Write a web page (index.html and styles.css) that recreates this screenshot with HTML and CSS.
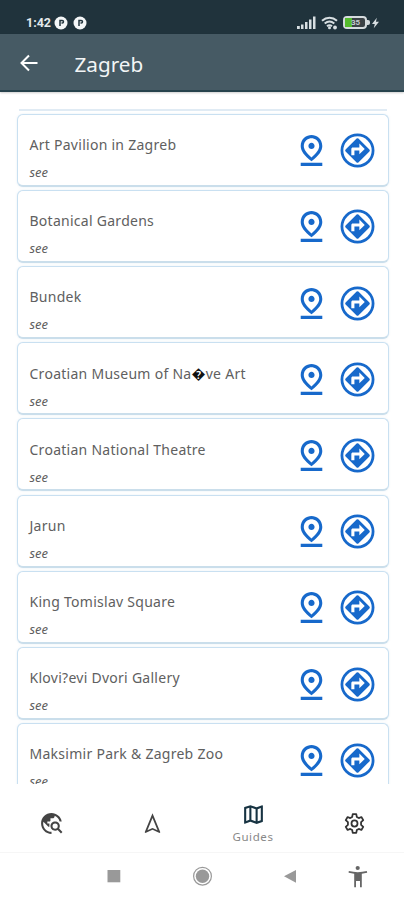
FILE: index.html
```
<!DOCTYPE html>
<html lang="en">
<head>
<meta charset="utf-8">
<title>Zagreb</title>
<link rel="stylesheet" href="styles.css">
</head>
<body>
<svg class="defs" aria-hidden="true">
  <symbol id="pin" viewBox="0 0 24 24"><path d="M12 4c1.93 0 5 1.4 5 5.15 0 2.16-1.72 4.67-5 7.32-3.28-2.65-5-5.17-5-7.32C7 5.4 10.07 4 12 4m0-2C8.73 2 5 4.46 5 9.15c0 3.12 2.33 6.41 7 9.85 4.67-3.44 7-6.73 7-9.85C19 4.46 15.27 2 12 2zm0 5c-1.1 0-2 .9-2 2s.9 2 2 2 2-.9 2-2-.9-2-2-2zM5 20h14v2H5z"/></symbol>
  <symbol id="direction" viewBox="0 0 24 24"><path fill-rule="evenodd" d="M12 1a11 11 0 1 0 0 22 11 11 0 0 0 0-22zm0 20.200a9.200 9.200 0 1 1 0-18.400 9.200 9.200 0 0 1 0 18.400z"/><path fill-rule="evenodd" d="M19.730 11.420l-7.160-7.150a.8.8 0 0 0-1.140 0l-7.160 7.150a.8.8 0 0 0 0 1.150l7.160 7.160a.8.8 0 0 0 1.140 0l7.160-7.160a.8.8 0 0 0 0-1.150zM13.200 14.500V12H10v3H8v-4c0-.6.4-1 1-1h4.200V7.500l3.500 3.500z"/></symbol>
  <symbol id="badge" viewBox="0 0 14 14"><circle cx="7" cy="7" r="6.500" fill="#f4f7f8"/><path d="M6 10V4.500h2.200a1.300 1.300 0 0 1 0 2.600H7.500" fill="none" stroke="#22353d" stroke-width="1.500"/></symbol>
</svg>
<div class="screen">
  <div class="status">
    <span class="time">1:42</span>
    <svg class="badge"><use href="#badge"/></svg>
    <svg class="badge second"><use href="#badge"/></svg>
    <svg class="signal" viewBox="0 0 19 13"><path d="M0 10h2.800v3H0zM4 8.500h2.500V13H4zM8 6h2.500v7H8zM12 3.500h2.500V13H12zM16 .5h2.500V13H16z"/></svg>
    <svg class="wifi" viewBox="0 0 17 14"><g fill="none" stroke="#d8dfe2" stroke-width="2"><path d="M1 4.800c4.500-4 10.500-4 15 0M3.700 7.500c3-2.600 6.600-2.600 9.600 0M6 10.200c1.600-1.300 3.400-1.300 5 0"/></g><circle cx="8.500" cy="11.700" r="1.500"/><circle cx="14" cy="11.500" r="1.900"/></svg>
    <div class="battery"><span class="charge"></span><span class="level">35</span></div>
    <svg class="bolt" viewBox="0 0 8 12"><path d="M5.500 0L0 7h3.200L2 12l6-7.500H4.500z"/></svg>
  </div>
  <header class="appbar">
    <svg class="back" viewBox="0 0 18 18"><path d="M9 1.500L1.500 9 9 16.500M1.700 9H17.500"/></svg>
    <h1>Zagreb</h1>
  </header>
  <main class="list">
    <div class="edge"></div>
    <article class="card"><div><h2>Art Pavilion in Zagreb</h2><p>see</p></div><svg class="act"><use href="#pin"/></svg><svg class="act"><use href="#direction"/></svg></article>
    <article class="card"><div><h2>Botanical Gardens</h2><p>see</p></div><svg class="act"><use href="#pin"/></svg><svg class="act"><use href="#direction"/></svg></article>
    <article class="card"><div><h2>Bundek</h2><p>see</p></div><svg class="act"><use href="#pin"/></svg><svg class="act"><use href="#direction"/></svg></article>
    <article class="card"><div><h2>Croatian Museum of Na<span class="unknown">�</span>ve Art</h2><p>see</p></div><svg class="act"><use href="#pin"/></svg><svg class="act"><use href="#direction"/></svg></article>
    <article class="card"><div><h2>Croatian National Theatre</h2><p>see</p></div><svg class="act"><use href="#pin"/></svg><svg class="act"><use href="#direction"/></svg></article>
    <article class="card"><div><h2>Jarun</h2><p>see</p></div><svg class="act"><use href="#pin"/></svg><svg class="act"><use href="#direction"/></svg></article>
    <article class="card"><div><h2>King Tomislav Square</h2><p>see</p></div><svg class="act"><use href="#pin"/></svg><svg class="act"><use href="#direction"/></svg></article>
    <article class="card"><div><h2>Klovi?evi Dvori Gallery</h2><p>see</p></div><svg class="act"><use href="#pin"/></svg><svg class="act"><use href="#direction"/></svg></article>
    <article class="card"><div><h2>Maksimir Park &amp; Zagreb Zoo</h2><p>see</p></div><svg class="act"><use href="#pin"/></svg><svg class="act"><use href="#direction"/></svg></article>
  </main>
  <nav class="tabs">
    <a><svg viewBox="0 0 24 24"><path d="M19.300 16.900c.4-.7.700-1.500.7-2.400 0-2.500-2-4.500-4.500-4.500S11 12 11 14.500s2 4.500 4.500 4.500c.9 0 1.700-.3 2.400-.7l3.200 3.200 1.400-1.400zm-3.800.1a2.500 2.500 0 1 1 0-5 2.500 2.500 0 0 1 0 5zM12 20v2C6.480 22 2 17.520 2 12S6.480 2 12 2c4.840 0 8.870 3.440 9.800 8h-2.070A8 8 0 0 0 15 4.590V5c0 1.100-.9 2-2 2h-2v2c0 .55-.45 1-1 1H8v2h2v3H9l-4.790-4.790C4.080 10.790 4 11.380 4 12c0 4.410 3.590 8 8 8z"/></svg></a>
    <a><svg viewBox="0 0 24 24"><path d="M12 6.600l4.860 11.840-3.220-1.430L12 16.280l-1.640.73-3.220 1.430L12 6.600M12 2.200L4.500 20.290l.71.710L12 18l6.790 3 .71-.710z"/></svg></a>
    <a class="active"><svg viewBox="0 0 24 24"><path d="M20.500 3l-.16.030L15 5.100 9 3 3.360 4.900c-.21.070-.36.250-.36.480V20.500c0 .28.220.5.500.5l.16-.030L9 18.900l6 2.100 5.640-1.900c.21-.070.360-.25.360-.48V3.500c0-.28-.22-.5-.5-.5zM10 5.470l4 1.400v11.660l-4-1.400V5.470zm-5 .99l3-1.010v11.700l-3 1.160V6.460zm14 11.080l-3 1.010V6.860l3-1.160v11.840z"/></svg><span>Guides</span></a>
    <a><svg viewBox="0 0 24 24"><g fill="none" stroke="#333" stroke-width="1.700" stroke-linejoin="round"><path d="M10.300 3h3.400l.5 2.700 1.900 1.100 2.500-1 1.800 3-2.100 1.900v2.600l2.100 1.900-1.800 3-2.500-1-1.900 1.100-.5 2.700h-3.400l-.5-2.700-1.900-1.100-2.500 1-1.800-3 2.100-1.900v-2.600L3.600 8.800l1.800-3 2.500 1 1.900-1.100z"/><circle cx="12" cy="12" r="2.900"/></g></svg></a>
  </nav>
  <div class="sysbar">
    <svg viewBox="0 0 404 48"><path d="M107.500 17H120.300V29.300H107.500z"/><circle cx="202.500" cy="23.200" r="6.700"/><circle cx="202.500" cy="23.200" r="8.900" fill="none" stroke="#999" stroke-width="1.200"/><path d="M284 23.200L296 16.900V29.700z"/><g fill="#666" transform="translate(0 -.8)"><circle cx="357.700" cy="15.800" r="2.100"/><path d="M348.800 18.800c6 1.500 12 1.500 18 0l.4 1.700c-2 .5-3.700.8-5.400 1V35h-1.800v-6.300h-4V35h-1.800V21.500c-1.900-.2-3.600-.5-5.600-1z"/></g></svg>
  </div>
</div>
</body>
</html>
```

FILE: styles.css
```
* { box-sizing: border-box; }
body { margin: 0; background: #fff; font-family: "Noto Sans", sans-serif; color: #606060; }
.defs { display: none; }
.screen { width: 404px; height: 900px; overflow: hidden; display: flex; flex-direction: column; }
.status { height: 34px; flex: none; background: #20333c; display: flex; align-items: center; padding: 11px 25px 0 26px; fill: #d8dfe2; }
.time { font: bold 12.500px/16px Roboto, sans-serif; color: #e4eaec; width: 27.500px; }
.badge { width: 14px; height: 14px; }
.second { margin-left: 5px; }
.signal { width: 19px; height: 13px; margin-left: auto; }
.wifi { width: 17px; height: 14px; margin-left: 5px; }
.battery { width: 24px; height: 13px; margin-left: 5px; border: 2px solid #d5dbde; border-radius: 4px; background: #3b4246; display: flex; align-items: center; position: relative; }
.battery::after { content: ""; position: absolute; left: 22px; top: 2px; width: 2.500px; height: 5px; background: #d5dbde; border-radius: 0 2px 2px 0; }
.charge { width: 7px; height: 9px; background: #55bb2d; }
.level { font: bold 8px/9px Roboto, sans-serif; color: #c5cccf; margin-left: -1px; }
.bolt { width: 7px; height: 12px; margin-left: 5px; }
.appbar { height: 58px; flex: none; background: #465a64; border-bottom: 2px solid #26424c; display: flex; align-items: center; padding-left: 20px; box-shadow: 0 1px 2px #0003; }
.back { width: 18px; height: 18px; margin-top: 1px; fill: none; stroke: #fff; stroke-width: 2; }
h1 { margin: 3px 0 0 36.500px; font-size: 20.700px; line-height: 28px; font-weight: 400; color: #f2f5f6; }
.list { height: 675px; margin-top: 17px; flex: none; overflow: hidden; padding: 0 15.500px 0 16.500px; display: flex; flex-direction: column; gap: 3.200px; }
.edge { flex: none; height: 2px; background: #e0ebf4; margin: 0 2px -.5px; }
.card { height: 73px; flex: none; border: 1px solid #c9e0f1; border-bottom: 2px solid #cadeeb; border-radius: 6px; background: #fff; box-shadow: 0 0 2px #a9cbe360; display: flex; padding: 0 12px 0 12px; align-items: center; }
.card > div { flex: 1; align-self: stretch; padding-top: 20.300px; white-space: nowrap; }
h2 { margin: 0; font-size: 14px; line-height: 20px; font-weight: 400; letter-spacing: .27px; }
p { margin: 8px 0 0; font-size: 13px; line-height: 18px; font-style: italic; }
.unknown { color: #111; }
.act { width: 37px; height: 37px; margin-top: 2px; fill: #1769cb; flex: none; }
.act + .act { margin-left: 8.500px; }
.tabs { height: 69px; flex: none; display: flex; border-bottom: 1px solid #f6f6f6; }
.tabs a { flex: 1; display: flex; flex-direction: column; align-items: center; justify-content: center; padding: 10px 0 0 1px; }
.tabs svg { width: 25px; height: 25px; fill: #444; }
.tabs .active { padding-top: 10px; }
.tabs .active svg { fill: #173342; }
.tabs span { font-size: 11.500px; line-height: 15px; letter-spacing: .6px; margin-top: 2px; color: #888; }
.sysbar { height: 47px; flex: none; fill: #999; }
.sysbar svg { width: 404px; height: 48px; display: block; }
```
